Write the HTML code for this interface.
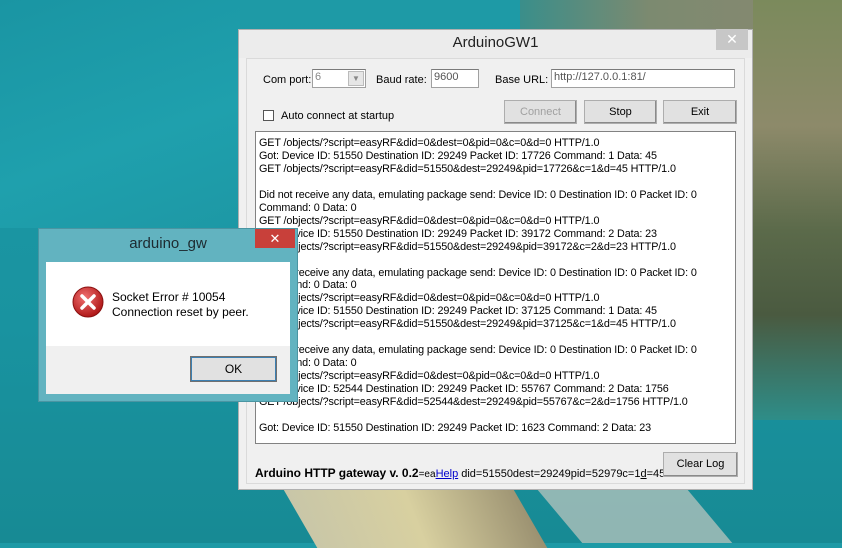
<!DOCTYPE html>
<html><head><style>
*{margin:0;padding:0;box-sizing:border-box}
body{width:842px;height:543px;overflow:hidden;position:relative;font-family:"Liberation Sans",sans-serif;
background:linear-gradient(180deg,#1e9aa6 0%,#1993a0 60%,#178a94 100%);}
.abs{position:absolute}
.btn{position:absolute;background:#e1e1e1;border:1px solid #adadad;font-size:11px;text-align:center;color:#000;box-shadow:inset -1px -1px 0 #8a8a8a}
.in{position:absolute;background:#fff;border:1px solid #a0a0a0;border-top-color:#7a7a7a;font-size:11px;color:#555;padding:1px 2px}
.lbl{position:absolute;font-size:11px;color:#000}
#log{position:absolute;left:255px;top:131px;width:481px;height:313px;background:#fff;border:1px solid #828282;font-size:10.8px;letter-spacing:-0.12px;line-height:12.95px;padding:5px 0 0 3px;white-space:pre;overflow:hidden;color:#000}
</style></head><body>
<div class="abs" style="left:520px;top:0;width:322px;height:30px;background:linear-gradient(90deg,#3a8e8a,#7c8a70 40%,#8a8870)"></div>
<div class="abs" style="left:753px;top:0;width:89px;height:420px;background:linear-gradient(180deg,#7b8a5c 0%,#8d8a6a 30%,#5b6a4a 55%,#4a5a40 75%,#2e8d88 100%)"></div>
<div class="abs" style="left:0;top:0;width:240px;height:228px;background:linear-gradient(160deg,#1a95a3,#1fa0ad 60%,#1d98a5)"></div>
<div class="abs" style="left:300px;top:488px;width:230px;height:60px;background:linear-gradient(100deg,#c8c6a8,#d8d0a0 50%,#9a9070);transform:skewX(30deg)"></div>
<div class="abs" style="left:560px;top:490px;width:150px;height:53px;background:#c5c9c0;opacity:.7;transform:skewX(40deg)"></div>

<div class="abs" style="left:238px;top:29px;width:515px;height:461px;background:#f0f0f0;border:1px solid #b0b0b0"></div>
<div class="abs" style="left:239px;top:30px;width:513px;height:28px;background:#ececec"></div>
<div class="abs" style="left:239px;top:34px;width:513px;font-size:15px;text-align:center;color:#222">ArduinoGW1</div>
<div class="abs" style="left:716px;top:29px;width:32px;height:21px;background:#c7c7c7;color:#fff;font-size:14px;text-align:center;line-height:21px">✕</div>
<div class="abs" style="left:246px;top:58px;width:499px;height:426px;background:#f0f0f0;border:1px solid #dadada"></div>

<div class="lbl" style="left:263px;top:74px">Com port:</div>
<div class="in" style="left:312px;top:69px;width:54px;height:19px;color:#888">6</div>
<div class="abs" style="left:348px;top:71px;width:16px;height:15px;background:#e6e6e6;border:1px solid #bbb;font-size:8px;color:#888;text-align:center;line-height:14px">▼</div>
<div class="lbl" style="left:376px;top:74px">Baud rate:</div>
<div class="in" style="left:431px;top:69px;width:48px;height:19px">9600</div>
<div class="lbl" style="left:495px;top:74px">Base URL:</div>
<div class="in" style="left:551px;top:69px;width:184px;height:19px">http://127.0.0.1:81/</div>

<div class="abs" style="left:263px;top:110px;width:11px;height:11px;background:#fff;border:1px solid #555"></div>
<div class="lbl" style="left:281px;top:110px">Auto connect at startup</div>
<div class="btn" style="left:504px;top:100px;width:73px;height:24px;line-height:22px;color:#a0a0a0">Connect</div>
<div class="btn" style="left:584px;top:100px;width:73px;height:24px;line-height:22px">Stop</div>
<div class="btn" style="left:663px;top:100px;width:74px;height:24px;line-height:22px">Exit</div>

<div id="log">GET /objects/?script=easyRF&amp;did=0&amp;dest=0&amp;pid=0&amp;c=0&amp;d=0 HTTP/1.0
Got: Device ID: 51550 Destination ID: 29249 Packet ID: 17726 Command: 1 Data: 45
GET /objects/?script=easyRF&amp;did=51550&amp;dest=29249&amp;pid=17726&amp;c=1&amp;d=45 HTTP/1.0

Did not receive any data, emulating package send: Device ID: 0 Destination ID: 0 Packet ID: 0
Command: 0 Data: 0
GET /objects/?script=easyRF&amp;did=0&amp;dest=0&amp;pid=0&amp;c=0&amp;d=0 HTTP/1.0
Got: Device ID: 51550 Destination ID: 29249 Packet ID: 39172 Command: 2 Data: 23
GET /objects/?script=easyRF&amp;did=51550&amp;dest=29249&amp;pid=39172&amp;c=2&amp;d=23 HTTP/1.0

Did not receive any data, emulating package send: Device ID: 0 Destination ID: 0 Packet ID: 0
Command: 0 Data: 0
GET /objects/?script=easyRF&amp;did=0&amp;dest=0&amp;pid=0&amp;c=0&amp;d=0 HTTP/1.0
Got: Device ID: 51550 Destination ID: 29249 Packet ID: 37125 Command: 1 Data: 45
GET /objects/?script=easyRF&amp;did=51550&amp;dest=29249&amp;pid=37125&amp;c=1&amp;d=45 HTTP/1.0

Did not receive any data, emulating package send: Device ID: 0 Destination ID: 0 Packet ID: 0
Command: 0 Data: 0
GET /objects/?script=easyRF&amp;did=0&amp;dest=0&amp;pid=0&amp;c=0&amp;d=0 HTTP/1.0
Got: Device ID: 52544 Destination ID: 29249 Packet ID: 55767 Command: 2 Data: 1756
GET /objects/?script=easyRF&amp;did=52544&amp;dest=29249&amp;pid=55767&amp;c=2&amp;d=1756 HTTP/1.0

Got: Device ID: 51550 Destination ID: 29249 Packet ID: 1623 Command: 2 Data: 23</div>

<div class="abs" style="left:255px;top:466px;font-size:12px;font-weight:bold;color:#000;white-space:nowrap">Arduino HTTP gateway v. 0.2<span style="font-weight:normal;font-size:10px">=ea</span><span style="font-weight:normal;font-size:11px;color:#0000cc;text-decoration:underline">Help</span><span style="font-weight:normal;font-size:11px">&nbsp;did=51550dest=29249pid=52979c=1<u>d</u>=45</span></div>
<div class="btn" style="left:663px;top:452px;width:75px;height:25px;line-height:23px">Clear Log</div>

<div class="abs" style="left:38px;top:228px;width:260px;height:174px;background:#62b3c0;border:1px solid #4a95a2"></div>
<div class="abs" style="left:38px;top:235px;width:260px;font-size:15px;text-align:center;color:#1d2a30">arduino_gw</div>
<div class="abs" style="left:255px;top:229px;width:40px;height:19px;background:#c8403a;color:#fff;font-size:13px;text-align:center;line-height:19px">✕</div>
<div class="abs" style="left:46px;top:262px;width:244px;height:132px;background:#f0f0f0"></div>
<div class="abs" style="left:46px;top:262px;width:244px;height:84px;background:#fff"></div>
<svg class="abs" style="left:72px;top:286px" width="32" height="32" viewBox="0 0 32 32">
<defs><radialGradient id="g" cx="40%" cy="35%" r="65%"><stop offset="0" stop-color="#f07070"/><stop offset="1" stop-color="#b01818"/></radialGradient></defs>
<circle cx="16" cy="16" r="15" fill="url(#g)" stroke="#8a1010"/>
<path d="M10 10L22 22M22 10L10 22" stroke="#fff" stroke-width="3.5" stroke-linecap="round"/></svg>
<div class="abs" style="left:112px;top:290px;font-size:12px;line-height:15px;color:#000">Socket Error # 10054<br>Connection reset by peer.</div>
<div class="abs" style="left:190px;top:356px;width:87px;height:26px;background:#e1e1e1;border:1px solid #707070;box-shadow:inset 0 0 0 1px #3c7fb1;font-size:12px;text-align:center;line-height:24px">OK</div>
</body></html>
